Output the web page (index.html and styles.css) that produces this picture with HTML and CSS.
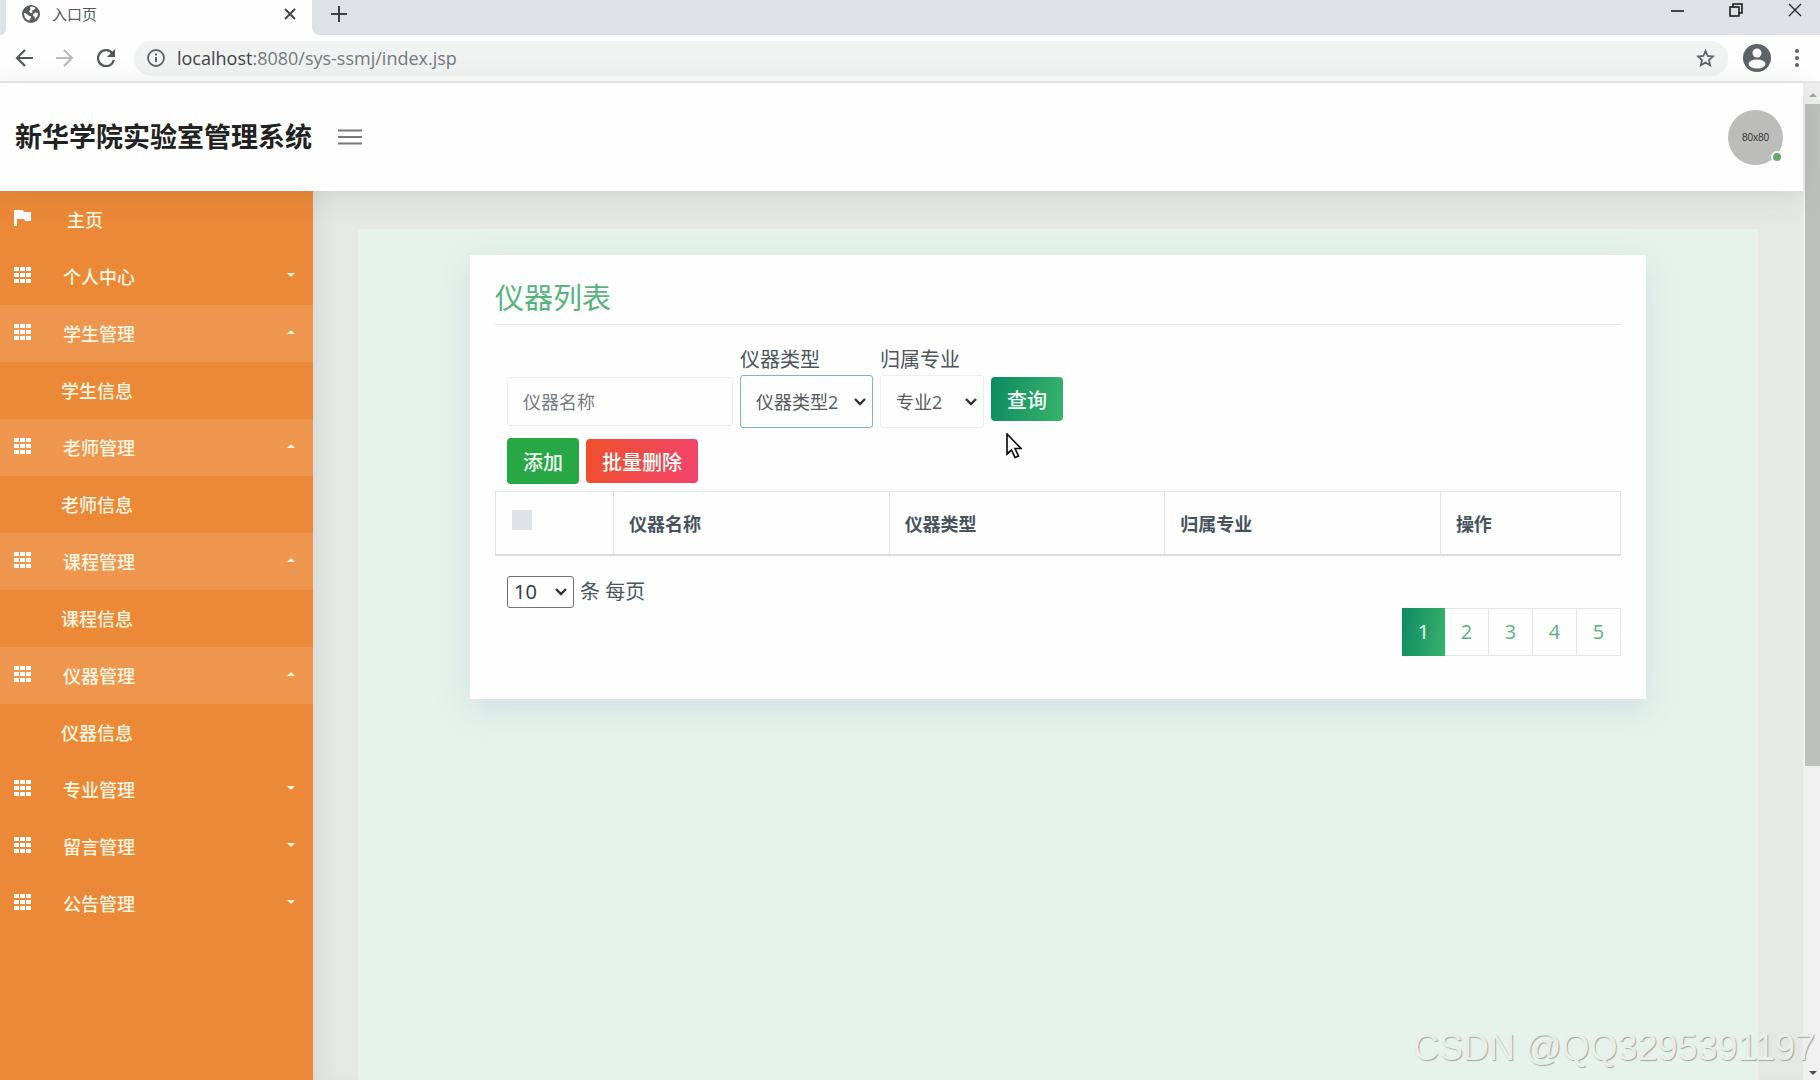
FILE: index.html
```html
<!DOCTYPE html>
<html lang="zh-CN">
<head>
<meta charset="utf-8">
<meta name="viewport" content="width=device-width, initial-scale=1">
<title>入口页</title>
<link rel="stylesheet" href="styles.css">
</head>
<body>
<svg class="sprite" aria-hidden="true">
  <symbol id="grid" viewBox="0 0 17 16">
    <path d="M0 0h5v4H0zM6 0h5v4H6zM12 0h5v4h-5zM0 6h5v4H0zM6 6h5v4H6zM12 6h5v4h-5zM0 12h5v4H0zM6 12h5v4H6zM12 12h5v4h-5z"/>
  </symbol>
  <symbol id="down" viewBox="0 0 8 4"><path d="M0 0h8L4 4z"/></symbol>
  <symbol id="up" viewBox="0 0 8 4"><path d="M0 4h8L4 0z"/></symbol>
</svg>

<div class="tabbar">
  <div class="tabbar-edge"></div>
  <div class="tab">
    <svg class="globe" viewBox="0 0 18 18" aria-hidden="true"><circle cx="9" cy="9" r="9" fill="#5a5d60"/><path d="M2 8c2 0 3 1 4.500 2.500 1 1 2.500 0 2.500 1.500 0 1.500-1.500 1.500-1.500 3.500C4 15 2 12 2 8zM8 2c2-.6 4-.2 5.500 1L12 5l-2 .5.5 2-2 .5L7 6.500 8.500 4.500zM11 9l2.500-1.500L16 8c0 2.500-1 4.500-3 6l-.5-2.500L11 11z" fill="#fdfefd"/></svg>
    <span class="tab-title">入口页</span>
    <button class="chrome-btn tab-close" aria-label="关闭"><svg width="12" height="12" viewBox="0 0 12 12"><path d="M1 1l10 10M11 1L1 11" stroke="#45484b" stroke-width="2"/></svg></button>
  </div>
  <div class="tabbar-rest">
    <button class="chrome-btn" aria-label="新标签页"><svg width="16" height="16" viewBox="0 0 16 16"><path d="M8 0v16M0 8h16" stroke="#3c4043" stroke-width="2"/></svg></button>
    <div class="window-btns">
      <button class="chrome-btn" aria-label="最小化"><svg width="14" height="14" viewBox="0 0 14 14"><path d="M1 8h13" stroke="#111" stroke-width="1.500"/></svg></button>
      <button class="chrome-btn" aria-label="还原"><svg width="14" height="14" viewBox="0 0 14 14"><path d="M1 4h9v9H1zM4 4V1h9v9h-3" fill="none" stroke="#111" stroke-width="1.500"/></svg></button>
      <button class="chrome-btn" aria-label="关闭窗口"><svg width="14" height="14" viewBox="0 0 14 14"><path d="M1 1l12 12M13 1L1 13" stroke="#222" stroke-width="1.300"/></svg></button>
    </div>
  </div>
</div>

<div class="toolbar">
  <button class="chrome-btn" aria-label="后退"><svg width="18" height="18" viewBox="0 0 18 18"><path d="M18 9H2M10 1L2 9l8 8" fill="none" stroke="#53565a" stroke-width="2.200"/></svg></button>
  <button class="chrome-btn" aria-label="前进"><svg width="18" height="18" viewBox="0 0 18 18"><path d="M0 9h16M8 1l8 8-8 8" fill="none" stroke="#b9bbbd" stroke-width="2.200"/></svg></button>
  <button class="chrome-btn" aria-label="刷新"><svg width="18" height="18" viewBox="0 0 18 18"><path d="M15.500 4.500A8 8 0 1 0 16.800 11" fill="none" stroke="#53565a" stroke-width="2.200"/><path d="M18 0v8h-8z" fill="#53565a"/></svg></button>
  <div class="omnibox">
    <svg width="18" height="18" viewBox="0 0 18 18" aria-hidden="true"><circle cx="9" cy="9" r="8" fill="none" stroke="#5f6368" stroke-width="1.800"/><path d="M9 8v5M9 4.500v2" stroke="#5f6368" stroke-width="2"/></svg>
    <span class="url"><span class="url-host">localhost</span>:8080/sys-ssmj/index.jsp</span>
    <button class="chrome-btn" aria-label="收藏"><svg width="19" height="18" viewBox="0 0 24 23"><path d="M12 2.500l2.700 6.400 6.900.6-5.200 4.600 1.600 6.800-6-3.600-6 3.600 1.600-6.800L2.400 9.500l6.900-.6z" fill="none" stroke="#5f6368" stroke-width="2.200"/></svg></button>
  </div>
  <button class="chrome-btn profile" aria-label="用户"><svg width="28" height="28" viewBox="0 0 28 28"><circle cx="14" cy="14" r="14" fill="#5f6368"/><circle cx="14" cy="9" r="4.500" fill="#fdfefd"/><ellipse cx="14" cy="20" rx="8.500" ry="4.500" fill="#fdfefd"/></svg></button>
  <button class="chrome-btn" aria-label="菜单"><svg width="4" height="18" viewBox="0 0 4 18"><g fill="#5f6368"><circle cx="2" cy="2" r="2"/><circle cx="2" cy="9" r="2"/><circle cx="2" cy="16" r="2"/></g></svg></button>
</div>

<div class="viewport">
  <div class="page">
    <header class="header">
      <h1 class="brand">新华学院实验室管理系统</h1>
      <button class="chrome-btn burger" aria-label="切换菜单"><svg width="24" height="16" viewBox="0 0 24 16"><path d="M0 1.500h24M0 8h24M0 14.500h24" stroke="#777" stroke-width="2"/></svg></button>
      <div class="avatar">80x80<span class="online"></span></div>
    </header>

    <div class="body">
      <nav class="sidebar">
        <a class="item home" href="#"><svg class="icon" viewBox="0 0 17 16"><path d="M0 0h9l1 2h7v9h-6l-1-2H3v7H0z"/></svg>主页</a>
        <a class="item" href="#"><svg class="icon"><use href="#grid"/></svg>个人中心<svg class="caret"><use href="#down"/></svg></a>
        <a class="item open" href="#"><svg class="icon"><use href="#grid"/></svg>学生管理<svg class="caret"><use href="#up"/></svg></a>
        <a class="item sub" href="#">学生信息</a>
        <a class="item open" href="#"><svg class="icon"><use href="#grid"/></svg>老师管理<svg class="caret"><use href="#up"/></svg></a>
        <a class="item sub" href="#">老师信息</a>
        <a class="item open" href="#"><svg class="icon"><use href="#grid"/></svg>课程管理<svg class="caret"><use href="#up"/></svg></a>
        <a class="item sub" href="#">课程信息</a>
        <a class="item open" href="#"><svg class="icon"><use href="#grid"/></svg>仪器管理<svg class="caret"><use href="#up"/></svg></a>
        <a class="item sub" href="#">仪器信息</a>
        <a class="item" href="#"><svg class="icon"><use href="#grid"/></svg>专业管理<svg class="caret"><use href="#down"/></svg></a>
        <a class="item" href="#"><svg class="icon"><use href="#grid"/></svg>留言管理<svg class="caret"><use href="#down"/></svg></a>
        <a class="item" href="#"><svg class="icon"><use href="#grid"/></svg>公告管理<svg class="caret"><use href="#down"/></svg></a>
      </nav>

      <main class="main">
        <div class="pane">
          <section class="card">
            <h2 class="card-title">仪器列表</h2>
            <form class="search">
              <div class="field">
                <div class="control"><input class="input" type="text" placeholder="仪器名称" aria-label="仪器名称"></div>
              </div>
              <div class="field">
                <label class="label" for="type">仪器类型</label>
                <div class="control"><select class="select active" id="type"><option>仪器类型2</option></select></div>
              </div>
              <div class="field">
                <label class="label" for="major">归属专业</label>
                <div class="control"><select class="select major" id="major"><option>专业2</option></select></div>
              </div>
              <div class="control"><button class="btn query" type="button">查询</button></div>
            </form>
            <div class="actions">
              <button class="btn add">添加</button>
              <button class="btn remove">批量删除</button>
            </div>
            <table class="table">
              <thead>
                <tr>
                  <th class="col-check"><input class="check" type="checkbox" aria-label="全选"></th>
                  <th class="col">仪器名称</th>
                  <th class="col">仪器类型</th>
                  <th class="col">归属专业</th>
                  <th>操作</th>
                </tr>
              </thead>
            </table>
            <div class="page-size">
              <select class="size-select" id="size"><option>10</option></select>
              <label for="size">条 每页</label>
            </div>
            <div class="pager">
              <a class="page-link current" href="#">1</a>
              <a class="page-link" href="#">2</a>
              <a class="page-link" href="#">3</a>
              <a class="page-link" href="#">4</a>
              <a class="page-link" href="#">5</a>
            </div>
          </section>
        </div>
      </main>
    </div>
  </div>
  <div class="scrollbar" aria-hidden="true">
    <svg class="arrow light" viewBox="0 0 8 4"><path d="M0 4h8L4 0z"/></svg>
    <div class="track"><div class="thumb"></div></div>
    <svg class="arrow" viewBox="0 0 8 4"><path d="M0 0h8L4 4z"/></svg>
  </div>
</div>

<svg class="cursor" viewBox="0 0 16 26" aria-hidden="true"><path d="M1 1v20l4.500-4 3.500 7.500 3.500-1.500-3.500-7.500h6z" fill="#fff" stroke="#111" stroke-width="1.700"/></svg>
<div class="watermark">CSDN @QQ3295391197</div>
</body>
</html>
```
FILE: styles.css
```css
* { box-sizing: border-box; }

body {
  margin: 0;
  height: 100vh;
  overflow: hidden;
  display: flex;
  flex-direction: column;
  background: #fdfefd;
  color: #4a5560;
  font-family: "Open Sans", "Noto Sans CJK SC", sans-serif;
  font-size: 20px;
  line-height: 30px;
}

a { color: inherit; text-decoration: none; }
button, input, select { font-family: inherit; margin: 0; }
.sprite { position: absolute; width: 0; height: 0; }

/* browser frame */
.chrome-btn {
  display: flex;
  align-items: center;
  padding: 0;
  border: 0;
  background: none;
}
.tabbar { display: flex; flex: none; height: 35px; background: #fdfefd; }
.tabbar-edge { width: 6px; background: #dee1e6; border-radius: 0 0 8px 0; }
.tab {
  width: 306px;
  display: flex;
  align-items: center;
  padding: 0 16px 7px;
  gap: 12px;
}
.globe { width: 18px; height: 18px; }
.tab-title { flex: 1; font-size: 15px; line-height: 24px; color: #55585b; }
.tabbar-rest {
  flex: 1;
  display: flex;
  justify-content: space-between;
  align-items: flex-start;
  padding: 6px 18px 0 19px;
  background: #dee1e6;
  border-radius: 0 0 0 8px;
}
.window-btns { display: flex; gap: 45px; margin-top: -3px; }
.toolbar {
  flex: none;
  display: flex;
  align-items: center;
  height: 48px;
  padding: 0 21px 0 15px;
  gap: 23px;
  border-bottom: 2px solid #e6e8e7;
}
.omnibox {
  flex: 1;
  display: flex;
  align-items: center;
  height: 35px;
  gap: 12px;
  margin-left: -4px;
  padding: 0 13px;
  border-radius: 18px;
  background: #f1f3f3;
}
.url { flex: 1; font-size: 18px; line-height: 24px; color: #75797c; }
.url-host { color: #3f4347; }
.profile { margin: 0 1px 0 -8px; }

.viewport { flex: 1; display: flex; min-height: 0; }
.page { flex: 1; display: flex; flex-direction: column; }

.scrollbar {
  width: 17px;
  display: flex;
  flex-direction: column;
  align-items: center;
  padding: 10px 0 5px 2px;
  gap: 7px;
  background: #eff0ef;
}
.track { flex: 1; width: 100%; }
.thumb { height: 69%; background: #bec0be; }
.arrow { width: 8px; height: 4px; fill: #4b4f4d; }
.light { fill: #a5a7a5; }

/* page header */
.header {
  position: relative;
  z-index: 1;
  display: flex;
  align-items: center;
  height: 108px;
  padding: 0 20px 0 15px;
  box-shadow: 0 4px 30px rgba(60, 70, 60, 0.12);
  background: #fdfefd;
}
.brand { margin: 0; font-size: 27px; line-height: 40px; font-weight: 700; color: #222; }
.burger { margin-left: 26px; }
.avatar {
  position: relative;
  width: 55px;
  height: 55px;
  margin-left: auto;
  border-radius: 50%;
  background: #bcbdbb;
  color: #333;
  font: 10px/55px "Liberation Sans", sans-serif;
  text-align: center;
}
.online {
  position: absolute;
  right: 0;
  bottom: 2px;
  width: 12px;
  height: 12px;
  border: 2px solid #fdfefd;
  border-radius: 50%;
  background: #65a869;
}

.body { flex: 1; display: flex; }

/* sidebar */
.sidebar { width: 313px; background: #ec8937; color: #fff6e2; }
.item {
  display: flex;
  align-items: center;
  height: 57px;
  padding: 0 18px 0 14px;
  font-size: 18px;
  font-weight: 500;
}
.open { background: #ee964e; }
.sub { padding-left: 61px; }
.icon { width: 17px; height: 16px; margin: 0 32px 4px 0; fill: #fff; }
.home .icon { margin-right: 36px; }
.caret { width: 8px; height: 4px; margin: 0 0 3px auto; fill: #fff6e2; }

/* content */
.main { flex: 1; display: flex; padding: 38px 45px 0; background: #e6e8e6; box-shadow: inset 16px 0 24px -16px rgba(60, 70, 60, 0.14); }
.pane { flex: 1; padding: 26px 8% 0; background: #e6f3ec; }
.card {
  padding: 24px 25px 43px;
  background: #fdfefd;
  box-shadow: 0 10px 30px rgba(160, 180, 205, 0.3);
}
.card-title {
  margin: 0 0 20px;
  padding-bottom: 8px;
  border-bottom: 1px solid #e4e8e7;
  font-size: 29px;
  line-height: 37px;
  font-weight: 400;
  color: #55b47c;
}
.search { display: flex; align-items: flex-end; gap: 7px; padding-left: 12px; }
.label { display: block; }
.control { display: flex; align-items: center; height: 53px; }
.input, .select {
  border: 1px solid #ebeeef;
  border-radius: 3px;
  padding: 0 15px;
  background-color: #fdfefd;
  color: #55595d;
  font-size: 18px;
}
.input { width: 226px; height: 49px; }
.input::placeholder { color: #777b7f; opacity: 1; }
.select, .size-select {
  appearance: none;
  background-image: url("data:image/svg+xml,%3Csvg xmlns='http://www.w3.org/2000/svg' viewBox='0 0 12 8'%3E%3Cpath d='M1 1l5 5 5-5' fill='none' stroke='%23333' stroke-width='2.400'/%3E%3C/svg%3E");
  background-repeat: no-repeat;
  background-position: right 6px center;
  background-size: 12px 8px;
}
.select { width: 133px; height: 53px; }
.major { width: 104px; }
.active { border-color: #80b0e0; }
.btn {
  height: 44px;
  padding: 0 16px;
  border: 0;
  border-radius: 4px;
  color: #f4fff6;
  font-size: 20px;
  font-weight: 500;
}
.query { margin-bottom: 5px; background: linear-gradient(100deg, #0d8a62, #38b36c); }
.add { height: 46px; background: #28a745; }
.remove { background: linear-gradient(100deg, #f04f2c, #f2436c); }
.actions { display: flex; align-items: center; gap: 7px; padding: 10px 0 7px 12px; }
.table { width: 100%; table-layout: fixed; border-collapse: collapse; color: #47525d; }
.table th {
  height: 63px;
  padding: 3px 15px 0;
  border: 1px solid #e1e5e7;
  border-bottom: 2px solid #dcdfe1;
  text-align: left;
  font-size: 18px;
  font-weight: 700;
}
.table .col-check { width: 118px; padding-top: 0; }
.table .col { width: 24.5%; }
.check { display: block; appearance: none; width: 20px; height: 20px; margin: 0 0 6px 1px; background: #dee2e6; }
.page-size { display: flex; align-items: center; gap: 6px; padding: 20px 0 0 12px; }
.size-select {
  width: 67px;
  height: 32px;
  padding: 0 6px;
  border: 1px solid #6f7375;
  border-radius: 3px;
  background-color: #fdfefd;
  color: #333;
  font-size: 20px;
}
.pager { display: flex; justify-content: flex-end; }
.page-link {
  width: 44px;
  height: 48px;
  border: 1px solid #e3e6e7;
  border-left-width: 0;
  text-align: center;
  line-height: 46px;
  color: #55b47c;
}
.current { width: 43px; border: 0; line-height: 48px; color: #f4fff6; background: linear-gradient(100deg, #0d8a62, #38b36c); }

/* overlays */
.cursor { position: absolute; left: 1006px; top: 433px; width: 16px; height: 26px; }
.watermark {
  position: absolute;
  right: 5px;
  bottom: 12px;
  font: 36px/40px "Liberation Sans", sans-serif;
  color: #e9eeeb;
  text-shadow: 1px 1px 1px #a0a6a3;
}
```
